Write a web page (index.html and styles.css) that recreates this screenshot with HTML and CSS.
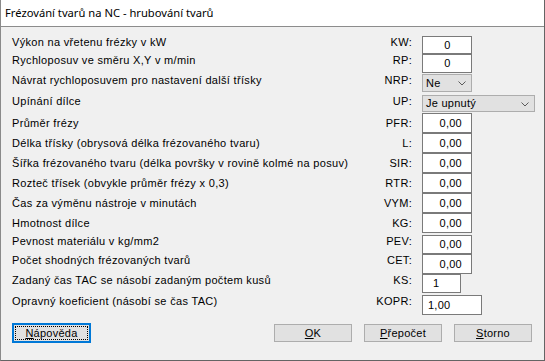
FILE: index.html
```html
<!DOCTYPE html>
<html lang="cs">
<head>
<meta charset="utf-8">
<title>Frézování tvarů na NC - hrubování tvarů</title>
<link rel="stylesheet" href="styles.css">
</head>
<body>
<div class="window">
  <div class="titlebar"><span class="title">Frézování tvarů na NC - hrubování tvarů</span></div>
  <div class="content">
    <div class="form">
      <div class="row h18"><span class="label">Výkon na vřetenu frézky v kW</span><span class="code">KW:</span><div class="ctrl"><div class="field w50 hfull center">0</div></div></div>
      <div class="row h20"><span class="label">Rychloposuv ve směru X,Y v m/min</span><span class="code">RP:</span><div class="ctrl"><div class="field w50 h19 center">0</div></div></div>
      <div class="row h21"><span class="label">Návrat rychloposuvem pro nastavení další třísky</span><span class="code">NRP:</span><div class="ctrl"><div class="combo w50 h18"><span>Ne</span><svg class="chev" width="8" height="5" viewBox="0 0 8 5"><polyline points="0.5,0.5 4,4 7.5,0.5" fill="none" stroke="#5a5a5a" stroke-width="1"/></svg></div></div></div>
      <div class="row h18"><span class="label">Upínání dílce</span><span class="code">UP:</span><div class="ctrl"><div class="combo w113 h17"><span>Je upnutý</span><svg class="chev" width="8" height="5" viewBox="0 0 8 5"><polyline points="0.5,0.5 4,4 7.5,0.5" fill="none" stroke="#5a5a5a" stroke-width="1"/></svg></div></div></div>
      <div class="row h20 mid"><span class="label">Průměr frézy</span><span class="code">PFR:</span><div class="ctrl"><div class="field w50 hfull num">0,00</div></div></div>
      <div class="row h20 mid"><span class="label">Délka třísky (obrysová délka frézovaného tvaru)</span><span class="code">L:</span><div class="ctrl"><div class="field w50 hfull num">0,00</div></div></div>
      <div class="row h20 mid"><span class="label">Šířka frézovaného tvaru (délka površky v rovině kolmé na posuv)</span><span class="code">SIR:</span><div class="ctrl"><div class="field w50 hfull num">0,00</div></div></div>
      <div class="row h20 mid"><span class="label">Rozteč třísek (obvykle průměr frézy x 0,3)</span><span class="code">RTR:</span><div class="ctrl"><div class="field w50 hfull num">0,00</div></div></div>
      <div class="row h20 mid"><span class="label">Čas za výměnu nástroje v minutách</span><span class="code">VYM:</span><div class="ctrl"><div class="field w50 hfull num">0,00</div></div></div>
      <div class="row h22 mid"><span class="label">Hmotnost dílce</span><span class="code">KG:</span><div class="ctrl"><div class="field w50 h20 num">0,00</div></div></div>
      <div class="row h19"><span class="label">Pevnost materiálu v kg/mm2</span><span class="code">PEV:</span><div class="ctrl"><div class="field w50 hfull num">0,00</div></div></div>
      <div class="row h20"><span class="label">Počet shodných frézovaných tvarů</span><span class="code">CET:</span><div class="ctrl"><div class="field w50 h20 num">0,00</div></div></div>
      <div class="row h21"><span class="label">Zadaný čas TAC se násobí zadaným počtem kusů</span><span class="code">KS:</span><div class="ctrl"><div class="field w39 h19 left ks">1</div></div></div>
      <div class="row h20"><span class="label">Opravný koeficient (násobí se čas TAC)</span><span class="code">KOPR:</span><div class="ctrl"><div class="field w60 hfull left">1,00</div></div></div>
    </div>
    <div class="buttons">
      <button class="btn focused"><u>N</u>ápověda</button>
      <div class="btn-group">
        <button class="btn"><u>O</u>K</button>
        <button class="btn"><u>P</u>řepočet</button>
        <button class="btn"><u>S</u>torno</button>
      </div>
    </div>
  </div>
</div>
</body>
</html>
```
FILE: styles.css
```css
* { box-sizing: border-box; }
html, body { margin: 0; padding: 0; background: #f0f0f0; }
body { font-family: "Liberation Sans", Arial, sans-serif; font-size: 11px; color: #000; letter-spacing: 0.25px; }

.window {
  width: 545px;
  height: 361px;
  background: #f0f0f0;
  border-right: 1px solid #646464;
  border-bottom: 1px solid #646464;
  border-left: 1px solid #8a8a8a;
  display: flex;
  flex-direction: column;
}

.titlebar {
  height: 27px;
  background: #fff;
  border-bottom: 1px solid #8c8c8c;
  padding-left: 4px;
  display: flex;
  align-items: center;
  flex-shrink: 0;
}
.title {
  font-family: "Noto Sans", "Open Sans", sans-serif;
  font-size: 11.2px;
  letter-spacing: 0;
  color: #000;
  line-height: 16px;
  margin-top: -1px;
}

.content {
  flex: 1;
  padding: 9px 0 0 11px;
  display: flex;
  flex-direction: column;
}

.form { display: flex; flex-direction: column; }

.row {
  display: grid;
  grid-template-columns: minmax(0, 1fr) 50px 122px;
  column-gap: 10px;
  align-items: start;
  line-height: 13px;
}
.row.mid .label, .row.mid .code { padding-top: 4px; }
.row.h17 { height: 17px; }
.row.h18 { height: 18px; }
.row.h19 { height: 19px; }
.row.h20 { height: 20px; }
.row.h21 { height: 21px; }
.row.h22 { height: 22px; }

.label { white-space: nowrap; overflow: visible; letter-spacing: 0.32px; }
.code { text-align: right; white-space: nowrap; letter-spacing: 0.3px; }
.ctrl { height: 100%; display: flex; align-items: flex-start; }

.field {
  background: #fff;
  border: 1px solid #7a7a7a;
  display: flex;
  align-items: center;
  line-height: 13px;
}
.field.center { justify-content: center; padding-left: 1px; }
.field.num { justify-content: flex-end; padding-right: 9px; }
.field.left { justify-content: flex-start; padding-left: 5px; }
.field.ks { padding-left: 10px; }

.w39 { width: 39px; }
.w50 { width: 50px; }
.w60 { width: 60px; }
.w113 { width: 113px; }
.hfull { height: 100%; }
.h17 { height: 17px; }
.h18 { height: 18px; }
.h19 { height: 19px; }
.h20 { height: 20px; }

.combo {
  background: #e1e1e1;
  border: 1px solid #adadad;
  display: flex;
  align-items: center;
  justify-content: space-between;
  padding: 0 5px 0 3px;
  line-height: 13px;
}
.chev { display: block; margin-top: 1px; }

.buttons {
  display: flex;
  align-items: center;
  margin-top: 8px;
  padding-right: 12px;
  height: 20px;
}
.btn-group { margin-left: auto; display: flex; gap: 12px; }

.btn {
  font-family: "Liberation Sans", Arial, sans-serif;
  font-size: 11px;
  letter-spacing: 0.25px;
  color: #000;
  background: #e1e1e1;
  border: 1px solid #adadad;
  width: 78px;
  height: 18px;
  padding: 0;
  margin: 0;
  line-height: 13px;
  text-align: center;
}
.btn u { text-decoration: underline; text-underline-offset: 1px; }
.btn.focused {
  width: 79px;
  height: 20px;
  border: 1px solid #0078d7;
  box-shadow: inset 0 0 0 1px #0078d7;
  outline: 1px dotted #000;
  outline-offset: -4px;
}
```
